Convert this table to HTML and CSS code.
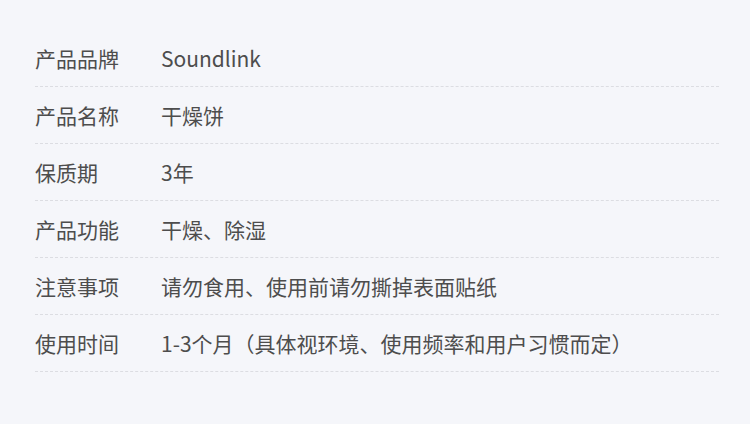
FILE: index.html
```html
<!DOCTYPE html>
<html lang="zh-CN">
<head>
<meta charset="UTF-8">
<meta name="viewport" content="width=device-width, initial-scale=1.0">
<title>产品参数</title>
<link rel="stylesheet" href="styles.css">
</head>
<body>
<div class="specs">
<div class="row"><span class="label">产品品牌</span><span class="value">Soundlink</span></div>
<div class="row"><span class="label">产品名称</span><span class="value">干燥饼</span></div>
<div class="row"><span class="label">保质期</span><span class="value">3年</span></div>
<div class="row"><span class="label">产品功能</span><span class="value">干燥、除湿</span></div>
<div class="row"><span class="label">注意事项</span><span class="value">请勿食用、使用前请勿撕掉表面贴纸</span></div>
<div class="row"><span class="label">使用时间</span><span class="value">1-3个月（具体视环境、使用频率和用户习惯而定）</span></div>
</div>
</body>
</html>
```
FILE: styles.css
```css
body { margin: 0; background: #f5f6fa; font-family: "Noto Sans CJK SC", "Noto Sans", sans-serif; color: #4d4d4d; }
.specs { padding: 30px 31px 0 35px; }
.row { display: flex; align-items: center; height: 56px; border-bottom: 1px dashed #dcdde2; font-size: 21px; }
.label { width: 126px; flex-shrink: 0; }
.value { flex: 1; }
```
